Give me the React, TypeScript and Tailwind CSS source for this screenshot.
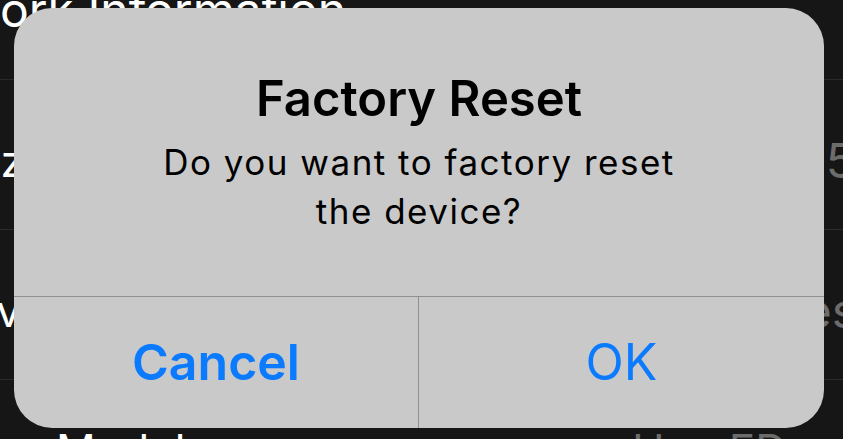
import React from "react";

const rows = [
  { label: "Timezone", value: "GMT5", labelShift: "-ml-[102px]", valueShift: "-mr-[12px]" },
  { label: "Server", value: "Yes", labelShift: "-ml-[75px]", valueShift: "-mr-[14px]" },
];

const App = () => {
  return (
    <div className="relative w-[843px] h-[439px] overflow-hidden bg-[#161616] font-['Inter',sans-serif]">
      {/* settings list behind the alert */}
      <div className="flex flex-col">
        <div className="h-[80px] border-b border-[#2a2a2a] overflow-hidden">
          <p className="-ml-[119px] -mt-[14px] text-[48px] leading-[48px] text-white whitespace-nowrap">
            Network Information
          </p>
        </div>
        {rows.map((row) => (
          <div
            key={row.label}
            className="h-[150px] border-b border-[#2a2a2a] flex justify-between items-start pt-[59px] overflow-hidden"
          >
            <span className={`${row.labelShift} text-[44px] leading-[44px] text-white whitespace-nowrap`}>
              {row.label}
            </span>
            <span className={`${row.valueShift} text-[48px] leading-[44px] text-[#6c6c6c] whitespace-nowrap`}>
              {row.value}
            </span>
          </div>
        ))}
        <div className="h-[150px] flex justify-between items-start pt-[48px] px-[56px]">
          <span className="text-[44px] leading-[44px] text-white">Model</span>
          <span className="text-[44px] leading-[44px] text-[#6c6c6c]">Hue ED</span>
        </div>
      </div>

      {/* alert */}
      <div className="absolute left-[14px] top-[8px] w-[810px] h-[420px] rounded-[38px] bg-[#c9c9c9] flex flex-col overflow-hidden">
        <div className="h-[288px] flex flex-col items-center pt-[62px] text-black text-center">
          <h1 className="text-[49px] leading-[58px] font-semibold">Factory Reset</h1>
          <p className="mt-[10px] text-[35px] leading-[49px] tracking-[1.5px]">
            Do you want to factory reset
            <br />
            the device?
          </p>
        </div>
        <div className="flex-1 grid grid-cols-2 border-t border-[#909090]">
          <button className="border-r border-[#909090] flex items-center justify-center text-[50px] font-semibold text-[#0a7aff]">
            Cancel
          </button>
          <button className="flex items-center justify-center text-[50px] text-[#0a7aff]">
            OK
          </button>
        </div>
      </div>
    </div>
  );
};

export default App;
